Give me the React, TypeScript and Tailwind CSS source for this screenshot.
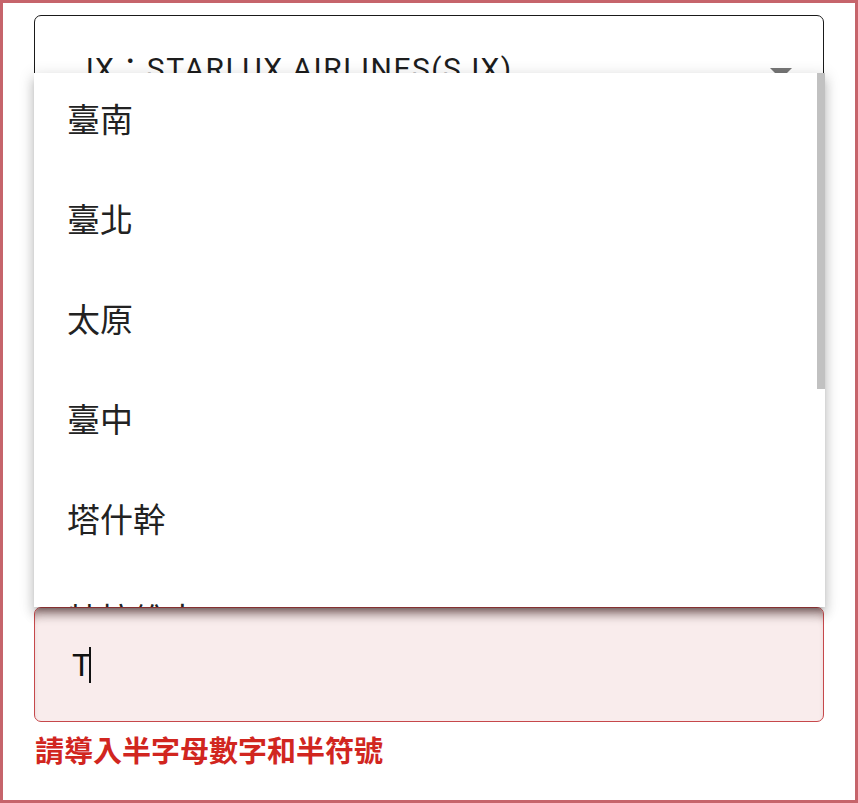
import React from "react";

const items = ["臺南", "臺北", "太原", "臺中", "塔什幹", "特拉維夫", "德黑蘭", "東京", "天津"];

export default function App() {
  return (
    <div
      className="relative w-[858px] h-[803px] overflow-hidden border-[3px] border-[#c6646b] bg-white px-[31px] pt-[12px]"
      style={{ fontFamily: 'Roboto, "Noto Sans CJK TC", sans-serif' }}
    >
      {/* Select */}
      <div className="relative flex h-[115px] w-[790px] items-center rounded-[7px] border border-[#1a1a1a] pb-[8px] pl-[42px]">
        <span className="text-[30px] tracking-[1.5px] text-[#1d1d1d]">JX：STARLUX AIRLINES(SJX)</span>
        <svg className="absolute right-[30px] top-[52px]" width="24" height="12" viewBox="0 0 24 12">
          <path d="M1 0 L23 0 L12 11 Z" fill="#777" />
        </svg>
      </div>

      {/* Input */}
      <div className="mt-[477px] flex h-[115px] w-[790px] items-center rounded-[7px] border border-[#c6484b] bg-[#f9ecec] pl-[37px] shadow-[inset_0_10px_10px_-6px_rgba(70,10,10,0.45)]">
        <span className="text-[32px] leading-none text-[#111]">T</span>
        <span className="-ml-[2px] h-[36px] w-[2px] bg-[#111]" />
      </div>
      <div
        className="mt-[9px] pl-[1px] text-[29px] font-bold leading-[36px] text-[#d1261f]"
        style={{ fontFamily: '"Noto Sans CJK TC", sans-serif' }}
      >
        請導入半字母數字和半符號
      </div>

      {/* Dropdown menu overlay */}
      <div className="absolute left-[31px] top-[70px] h-[534px] w-[791px] overflow-hidden bg-white shadow-[0_5px_5px_-3px_rgba(0,0,0,0.2),0_8px_10px_1px_rgba(0,0,0,0.14),0_3px_14px_2px_rgba(0,0,0,0.12)]">
        <div className="-mt-[4px] flex flex-col">
          {items.map((t) => (
            <div
              key={t}
              className="flex h-[100px] shrink-0 items-center pl-[33px] text-[33px] text-[#222]"
              style={{ fontFamily: '"Noto Sans CJK TC", sans-serif' }}
            >
              {t}
            </div>
          ))}
        </div>
        <div className="absolute right-0 top-0 h-[316px] w-[8px] bg-[#c1c1c1]" />
      </div>
    </div>
  );
}
